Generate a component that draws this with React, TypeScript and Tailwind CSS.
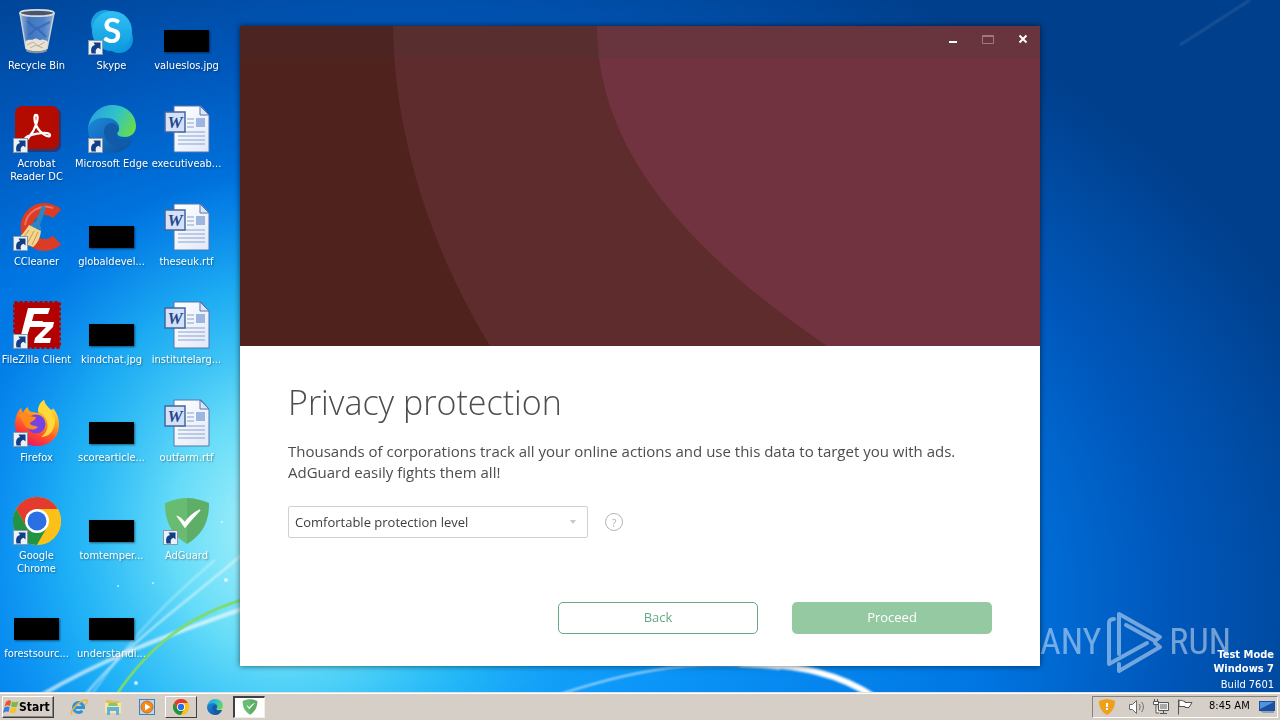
import type { ReactNode } from "react";

const Shortcut = () => (
  <svg viewBox="0 0 15 15" className="absolute bottom-0 left-0 size-[15px]" aria-hidden="true">
    <rect x="0.5" y="0.5" width="14" height="14" fill="#e9f1f9" stroke="#8b97a5" />
    <path d="M3.500 13.500c-1-5 0-7.500 3.500-8.500l-1.500-2.500h7v7l-2-1.700c-2.500.7-3.500 2.700-2.500 5.700z" fill="#123e86" />
  </svg>
);

const RecycleBin = () => (
  <svg viewBox="0 0 48 48" className="size-12">
    <defs>
      <linearGradient id="bin-glass">
        <stop offset="0" stopColor="#b9c9dc" />
        <stop offset="0.25" stopColor="#4d7cc2" />
        <stop offset="0.7" stopColor="#5c8dd0" />
        <stop offset="1" stopColor="#a8bdd6" />
      </linearGradient>
    </defs>
    <path d="M7 6l6 36c0 4 21 4 21 0l7-36z" fill="url(#bin-glass)" opacity="0.85" />
    <path d="M7 6l6 36M41 6l-7 36" stroke="#c3cedb" strokeWidth="1.5" />
    <path d="M12 35c3-4 6-1 9-3s5 2 7 1 5 0 7 2l-1 7c-3 3-18 3-21 0z" fill="#e8e2d4" />
    <path d="M14 38l6-3 5 4 7-4M17 41l6-3 7 3" fill="none" stroke="#bcae98" />
    <path d="M13 42c4 3 17 3 21 0v2c-3 3-18 3-21 0z" fill="#8b8f98" />
    <path d="M14 14l9 8 14-7M16 28l8-7 9 9" fill="none" stroke="#2f63b3" strokeWidth="2" opacity="0.7" />
    <ellipse cx="24" cy="6" rx="17" ry="3.2" fill="#49566b" stroke="#d9dde2" strokeWidth="1.8" />
  </svg>
);

const Skype = () => (
  <svg viewBox="0 0 48 48" className="size-12">
    <defs>
      <linearGradient id="skype" x1="0" y1="0" x2="0" y2="1">
        <stop offset="0" stopColor="#2fc0f2" />
        <stop offset="1" stopColor="#0f9be0" />
      </linearGradient>
    </defs>
    <circle cx="17" cy="17" r="14" fill="#1a9fdf" />
    <circle cx="31" cy="32" r="14" fill="#0d9ae0" />
    <circle cx="24" cy="24" r="20" fill="url(#skype)" />
    <text x="24" y="36" textAnchor="middle" fontSize="34" fontWeight="700" fill="#fff" className="font-['Lato',sans-serif]">S</text>
  </svg>
);

const Acrobat = () => (
  <svg viewBox="0 0 48 48" className="size-12">
    <rect x="3" y="3" width="45" height="44" rx="7" fill="#5a1018" opacity="0.5" />
    <rect x="2" y="1" width="44" height="43" rx="7" fill="#b30b00" />
    <path
      d="M12 34c0-4 24-9 25-4 0 4-10-1-14-10-2-5-2-10 0-10 4 0 0 14-7 22-2 3-4 4-4 2z"
      fill="none"
      stroke="#fff"
      strokeWidth="2.3"
      strokeLinejoin="round"
    />
  </svg>
);

const Edge = ({ id, className }: { id: string; className: string }) => (
  <svg viewBox="0 0 48 48" className={className}>
    <defs>
      <linearGradient id={`${id}-top`} x1="0" y1="0.3" x2="1" y2="0.7">
        <stop offset="0" stopColor="#2a9fe0" />
        <stop offset="0.5" stopColor="#2fc3c9" />
        <stop offset="1" stopColor="#6bdc47" />
      </linearGradient>
      <linearGradient id={`${id}-low`} x1="0" y1="0" x2="1" y2="1">
        <stop offset="0" stopColor="#1b8ade" />
        <stop offset="1" stopColor="#0d4c94" />
      </linearGradient>
    </defs>
    <path d="M0 24C1 10 12 0 24 0c15 0 24 10 24 21 0 7-5 11-11 11-7 0-9-3-7-5 3-4 0-12-9-12C10 15 1 20 0 24z" fill={`url(#${id}-top)`} />
    <path d="M0 24c1-7 9-12 19-11 8 0 13 6 12 12-1 3-4 3-3 6 2 3 11 4 17 2C42 42 34 48 24 48 10 48 0 37 0 24z" fill={`url(#${id}-low)`} />
    <path d="M16 27c0-5 3-9 8-9 5 1 8 5 6 8-2 2-3 4-1 6 4 3 11 3 16 1-2 5-6 8-10 9-10 1-19-6-19-15z" fill="#125ba8" />
  </svg>
);

const CCleaner = () => (
  <svg viewBox="0 0 48 48" className="size-12">
    <path d="M44 11a18 18 0 1 0 0 26" fill="none" stroke="#db3c26" strokeWidth="12" />
    <path d="M40 5a21 21 0 0 0-28 17" fill="none" stroke="#f0705a" strokeWidth="2" />
    <path d="M29 3l4 1-6 18 2 6-13-5 7-5z" fill="#2c86c2" />
    <path d="M16 22l12 6c-1 7-3 12-8 16L2 37c7-4 10-9 14-15z" fill="#f4d590" />
    <path d="M16 27l-8 11M21 28l-7 13M25 29l-6 13" stroke="#c99a4a" />
  </svg>
);

const FileZilla = () => (
  <svg viewBox="0 0 48 48" className="size-12">
    <rect x="1.5" y="1.5" width="45" height="45" fill="#b30000" stroke="#b30000" strokeWidth="3" strokeDasharray="3 2" />
    <path d="M15 7h22l-2 6H21l-2 7h11l-2 6H17l-4 12H7z" fill="#fff" />
    <path d="M26 21h15l-1 5-11 11h9l-1 5H21l1-5 11-11h-8z" fill="#fff" />
  </svg>
);

const Firefox = () => (
  <svg viewBox="0 0 48 48" className="size-12">
    <defs>
      <linearGradient id="fox" x1="0.8" y1="0" x2="0.3" y2="1">
        <stop offset="0" stopColor="#fff04a" />
        <stop offset="0.4" stopColor="#ff9a1f" />
        <stop offset="0.75" stopColor="#ff4033" />
        <stop offset="1" stopColor="#e3156a" />
      </linearGradient>
    </defs>
    <path d="M2 26c0-8 2-13 6-17l2 5c1-3 3-5 5-6 0 3 2 5 5 5l5 1c0-5 2-11 6-13 1 5 4 7 7 10 2-1 2-1 2-2 4 5 6 10 6 17 0 12-9 21-22 21S2 38 2 26z" fill="url(#fox)" />
    <path d="M31 1c1 5 4 7 7 10 3 4 4 8 4 12-1 10-7 15-14 15 7-5 8-12 5-18-3-5-7-7-8-8 0-4 2-9 6-11z" fill="#ffd83a" />
    <circle cx="23" cy="25" r="9.5" fill="#7542e5" />
    <path d="M5 16c4-2 8-2 11 1l7 1c0 3-4 4-6 6 0 3 5 2 8 4-4 4-10 3-13-1-2-3-2-6-7-11z" fill="#ff8a1c" />
  </svg>
);

const Chrome = ({ className }: { className: string }) => (
  <svg viewBox="0 0 48 48" className={className}>
    <circle cx="24" cy="24" r="24" fill="#fbc116" />
    <path d="M24 12h20.800A24 24 0 0 0 3.200 12L13.600 30z" fill="#e33b2e" />
    <path d="M3.200 12A24 24 0 0 0 24 48L34.400 30H13.600z" fill="#229342" />
    <path d="M24 12h20.800A24 24 0 0 1 24 48l10.400-18z" fill="#fbc116" />
    <circle cx="24" cy="24" r="12" fill="#fff" />
    <circle cx="24" cy="24" r="9.5" fill="#2a6fe3" />
  </svg>
);

const AdGuard = ({ className }: { className: string }) => (
  <svg viewBox="0 0 48 48" className={className}>
    <path d="M24 1C17 1 9 3 2 6c0 8 0 28 22 41V1z" fill="#68bc71" />
    <path d="M24 1c7 0 15 2 22 5 0 8 0 28-22 41V1z" fill="#5fae68" />
    <path d="M15 20c3 1 5 4 7 6 4-6 9-10 15-13-5 5-10 11-15 17z" fill="#fff" stroke="#fff" strokeWidth="1.5" />
  </svg>
);

const WordDoc = () => (
  <svg viewBox="0 0 48 48" className="size-12">
    <defs>
      <linearGradient id="page" x1="0" y1="0" x2="1" y2="1">
        <stop offset="0" stopColor="#fff" />
        <stop offset="1" stopColor="#e1e9f8" />
      </linearGradient>
    </defs>
    <path d="M11 1h27l8 9v37H11z" fill="url(#page)" stroke="#5875ab" />
    <path d="M37 1v9h9z" fill="#dbe6f8" stroke="#5875ab" />
    <path d="M24 14h7M24 18h7M24 22h7M15 27h27M15 31h27M15 35h27M15 39h27" stroke="#8aa1cf" />
    <rect x="33" y="13" width="9" height="9" fill="#9db6e0" />
    <rect x="2" y="7" width="20" height="20" fill="#d5e1f7" stroke="#44659f" strokeWidth="1.5" />
    <text x="12" y="23" textAnchor="middle" fontSize="17" fontWeight="700" fontStyle="italic" fill="#24488f" className="font-['Liberation_Serif',serif]">W</text>
  </svg>
);

const Picture = () => <span className="mb-[3px] block h-[22px] w-[45px] bg-black shadow-[1px_1px_2px_rgba(0,0,0,0.5)]" />;

type DesktopItem = { label: string; icon: ReactNode; shortcut?: boolean };

const items: DesktopItem[] = [
  { label: "Recycle Bin", icon: <RecycleBin /> },
  { label: "Acrobat Reader DC", icon: <Acrobat />, shortcut: true },
  { label: "CCleaner", icon: <CCleaner />, shortcut: true },
  { label: "FileZilla Client", icon: <FileZilla />, shortcut: true },
  { label: "Firefox", icon: <Firefox />, shortcut: true },
  { label: "Google Chrome", icon: <Chrome className="size-12" />, shortcut: true },
  { label: "forestsourc...", icon: <Picture /> },
  { label: "Skype", icon: <Skype />, shortcut: true },
  { label: "Microsoft Edge", icon: <Edge id="edge-desk" className="size-12" />, shortcut: true },
  { label: "globaldevel...", icon: <Picture /> },
  { label: "kindchat.jpg", icon: <Picture /> },
  { label: "scorearticle...", icon: <Picture /> },
  { label: "tomtemper...", icon: <Picture /> },
  { label: "understandi...", icon: <Picture /> },
  { label: "valueslos.jpg", icon: <Picture /> },
  { label: "executiveab...", icon: <WordDoc /> },
  { label: "theseuk.rtf", icon: <WordDoc /> },
  { label: "institutelarg...", icon: <WordDoc /> },
  { label: "outfarm.rtf", icon: <WordDoc /> },
  { label: "AdGuard", icon: <AdGuard className="size-12" />, shortcut: true },
];

const Wallpaper = () => (
  <svg viewBox="0 0 1280 720" preserveAspectRatio="none" className="absolute inset-0 size-full" aria-hidden="true">
    <defs>
      <radialGradient id="sky" gradientUnits="userSpaceOnUse" cx="0" cy="0" r="1" gradientTransform="translate(400 600) scale(980 700)">
        <stop offset="0" stopColor="#1fb2fb" />
        <stop offset="0.3" stopColor="#0a94f8" />
        <stop offset="0.6" stopColor="#0076e2" />
        <stop offset="0.78" stopColor="#0058bc" />
        <stop offset="1" stopColor="#003f8c" />
      </radialGradient>
      <radialGradient id="glow" gradientUnits="userSpaceOnUse" cx="0" cy="0" r="1" gradientTransform="translate(280 530) scale(310 360)">
        <stop offset="0" stopColor="#b4f5fb" />
        <stop offset="0.35" stopColor="#6fe3f8" stopOpacity="0.9" />
        <stop offset="0.7" stopColor="#2bc4f6" stopOpacity="0.6" />
        <stop offset="1" stopColor="#1fa8f5" stopOpacity="0" />
      </radialGradient>
      <filter id="soft" x="-20%" y="-20%" width="140%" height="140%">
        <feGaussianBlur stdDeviation="1.2" />
      </filter>
    </defs>
    <rect width="1280" height="720" fill="url(#sky)" />
    <rect width="1280" height="720" fill="url(#glow)" />
    <g fill="none" stroke="#fff" filter="url(#soft)">
      <path d="M40 696C100 660 170 634 245 608" strokeWidth="4" opacity="0.65" />
      <path d="M86 694C130 640 190 600 245 552" strokeWidth="2" opacity="0.6" />
      <path d="M92 694C140 625 180 590 215 560" strokeWidth="2" opacity="0.4" />
      <path d="M555 696C660 660 720 662 780 669" strokeWidth="2" opacity="0.7" />
      <path d="M740 664C800 664 840 674 876 698" strokeWidth="6" />
      <path d="M1180 45L1250 0" strokeWidth="2" opacity="0.15" />
    </g>
    <path d="M117 694C150 645 190 615 245 599" fill="none" stroke="#7ddc68" strokeWidth="3" opacity="0.9" />
    <g fill="#fff" opacity="0.7">
      <circle cx="222" cy="522" r="1" />
      <circle cx="226" cy="580" r="2" />
      <circle cx="136" cy="683" r="2" />
      <circle cx="118" cy="586" r="1" />
      <circle cx="153" cy="583" r="1" />
    </g>
  </svg>
);

const Watermark = () => (
  <div className="absolute right-[49px] bottom-4 flex items-center gap-1.5 font-['Roboto_Condensed','Roboto',sans-serif] text-[36px] leading-[68px] text-white opacity-45" aria-hidden="true">
    <span>ANY</span>
    <svg viewBox="0 0 56 64" className="h-16 w-14" fill="none" stroke="currentColor" strokeWidth="4" strokeLinejoin="round" strokeLinecap="round">
      <path d="M7 9c-3 0-5 1-5 4v41l38-21" />
      <path d="M12 44V4l41 23-5 4-29-16" />
      <path d="M12 54v7l41-24-5-4" />
    </svg>
    <span>RUN</span>
  </div>
);

const Banner = () => (
  <svg viewBox="0 0 800 320" preserveAspectRatio="none" className="absolute inset-0 size-full" aria-hidden="true">
    <rect width="800" height="320" fill="#4f221e" />
    <path d="M153 0C154 90 180 205 250 320H800V0z" fill="#5e2c2c" />
    <path d="M357 0C357 120 440 220 587 320H800V0z" fill="#70333f" />
  </svg>
);

const AdGuardWindow = () => (
  <section className="relative flex w-[62.5%] flex-col bg-white font-['Open_Sans','Noto_Sans',sans-serif] shadow-[0_0_6px_rgba(0,0,0,0.6)]">
    <div className="relative h-80">
      <Banner />
      <header className="relative flex h-8 items-center justify-end bg-[#3c3c3c]/15 pb-1.5 text-white">
        <button type="button" aria-label="Minimize" className="flex h-6 w-[35px] items-center justify-center">
          <svg viewBox="0 0 12 12" className="size-3" fill="currentColor"><path d="M2 8h8v2H2z" /></svg>
        </button>
        <button type="button" aria-label="Maximize" disabled className="flex h-6 w-[35px] items-center justify-center text-[#a07a80]">
          <svg viewBox="0 0 12 12" className="size-3" fill="none" stroke="currentColor"><path d="M0.5 2.5h11v8h-11zM0 3.5h12" /></svg>
        </button>
        <button type="button" aria-label="Close" className="flex h-6 w-[35px] items-center justify-center">
          <svg viewBox="0 0 12 12" className="size-3" fill="none" stroke="currentColor" strokeWidth="2"><path d="M2.5 2.5l7 7M9.5 2.5l-7 7" /></svg>
        </button>
      </header>
    </div>
    <div className="px-12 py-8 text-[#4d4d4d]">
      <h1 className="text-[34px] leading-[48px] font-light">Privacy protection</h1>
      <p className="mt-[15px] text-[15px] leading-[21px]">
        Thousands of corporations track all your online actions and use this data to target you with ads.
        <br />
        AdGuard easily fights them all!
      </p>
      <div className="mt-[23px] flex items-center gap-4">
        <div className="relative w-[300px]">
          <select
            aria-label="Protection level"
            defaultValue="comfortable"
            className="block h-8 w-full appearance-none rounded-xs border border-[#d0d0d0] bg-white pt-0.5 pl-1.5 text-[13px] text-[#3d3d3d]"
          >
            <option value="comfortable">Comfortable protection level</option>
          </select>
          <svg viewBox="0 0 6 4" className="pointer-events-none absolute top-3.5 right-3 h-1 w-1.5" fill="#c8c8c8"><path d="M0 0h6L3 4z" /></svg>
        </div>
        <button type="button" aria-label="Help" className="flex size-5 items-center justify-center">
          <span className="flex size-[18px] items-center justify-center rounded-full border border-[#b5b5b5] text-[11px] leading-none text-[#b5b5b5]">?</span>
        </button>
      </div>
      <div className="mt-16 flex justify-end gap-[34px] text-[13px]">
        <button type="button" className="h-8 w-[200px] rounded-[5px] border border-[#67a983] text-[#67a983]">Back</button>
        <button type="button" className="h-8 w-[200px] rounded-[5px] bg-[#95c9a2] text-white">Proceed</button>
      </div>
    </div>
  </section>
);

const Ie = () => (
  <svg viewBox="0 0 18 18" className="size-[18px]" fill="none">
    <path d="M4 9.5h9.500a5 5 0 1 0-1.200 3.300" stroke="#2f93dc" strokeWidth="3" />
    <path d="M2 16.500c-3-3 8-15 14.500-14.500 2 1-.5 3.500-1.500 5" stroke="#e8b933" strokeWidth="1.5" />
  </svg>
);

const Folder = () => (
  <svg viewBox="0 0 18 18" className="size-[18px]">
    <path d="M2 2h5l1 1h7v5H2z" fill="#e3bf58" />
    <path d="M1 5h16v10H1z" fill="#f8e7a0" />
    <path d="M5 5h8l1 3H4z" fill="#8bc36d" />
    <path d="M3 9h12v8h-3v-4H6v4H3z" fill="#62b3dc" />
  </svg>
);

const Player = () => (
  <svg viewBox="0 0 18 18" className="size-[18px]">
    <rect x="1.5" y="1.5" width="15" height="15" fill="#b9d9f2" stroke="#3d83bb" />
    <circle cx="9" cy="9" r="6" fill="#f18a1c" stroke="#d56d0c" />
    <path d="M7 5.500l5.500 3.500L7 12.500z" fill="#fff" />
  </svg>
);

const WinFlag = () => (
  <svg viewBox="0 0 16 16" className="size-4">
    <path d="M3 3c2-2 4-2 5-1L7 7C5 6 4 6 1.500 7.500z" fill="#e8552a" />
    <path d="M9 2.500c2 1 4 1 6.500 0L14 7.500c-2 1-4 1-6 0z" fill="#7cbb3c" />
    <path d="M1.300 8.500C3 7.500 5 7 6.700 8l-1.200 5C4 12 2 12.500 0 14z" fill="#3d7fd6" />
    <path d="M7.700 8.500c2 1 4 1 6 0l-1.200 5c-2 1-4 1-6 0z" fill="#f7c22d" />
  </svg>
);

const launchers = [
  { name: "Internet Explorer", icon: <Ie />, frame: "" },
  { name: "Windows Explorer", icon: <Folder />, frame: "" },
  { name: "Media Player", icon: <Player />, frame: "" },
  { name: "Google Chrome", icon: <Chrome className="size-4" />, frame: "border border-t-white border-l-white border-r-[#404040] border-b-[#404040]" },
  { name: "Microsoft Edge", icon: <Edge id="edge-bar" className="size-4" />, frame: "" },
  { name: "AdGuard", icon: <AdGuard className="size-4" />, frame: "border-t-2 border-l-2 border-r border-b bg-white border-t-[#404040] border-l-[#404040] border-r-[#f2f0ed] border-b-[#f2f0ed]" },
];

const Taskbar = () => (
  <footer className="relative flex h-7 shrink-0 items-center justify-between border-t border-[#e4e1dc] bg-[#d5cfc8] px-0.5 text-[11px] text-black shadow-[inset_0_1px_0_#fff]">
    <nav className="flex items-center">
      <button type="button" className="flex h-[22px] w-[52px] items-center border border-t-white border-l-white border-r-[#404040] border-b-[#404040] text-xs font-bold shadow-[inset_-1px_-1px_0_#8a8680]">
        <WinFlag />
        Start
      </button>
      <ul className="ml-[9px] flex gap-0.5">
        {launchers.map(({ name, icon, frame }) => (
          <li key={name}>
            <button type="button" aria-label={name} className={`flex h-[22px] w-8 items-center justify-center ${frame}`}>
              {icon}
            </button>
          </li>
        ))}
      </ul>
    </nav>
    <div className="flex h-[22px] w-[186px] items-center border border-t-[#85817b] border-l-[#85817b] border-r-white border-b-white pr-0.5 pl-1.5">
      <svg viewBox="0 0 16 16" className="size-4">
        <path d="M8 0c3 0 5 1 8 2 0 4-1 10-8 14C1 12 0 6 0 2c3-1 5-2 8-2z" fill="#f0a018" />
        <path d="M7 4h2v4H7zM7 9h2v2H7z" fill="#fff" />
      </svg>
      <svg viewBox="0 0 16 16" className="ml-3.5 size-4" fill="none" stroke="#6b6b6b">
        <path d="M.5 5.500h3l4-4v13l-4-4h-3z" fill="#fff" />
        <path d="M10 5c1.500 2 1.500 4 0 6M12.500 3c2.500 3 2.500 7 0 10" />
      </svg>
      <svg viewBox="0 0 16 16" className="ml-2 size-4" fill="none" stroke="#555">
        <path d="M5.500 3.500h10v8h-10zM7 14.500h7M10.500 12v2" fill="#f2f2f2" />
        <path d="M7 5h7v5H7z" fill="#a8a8a8" stroke="none" />
        <path d="M.5 2.500h5v3h-5zM1.500 0v2M4.500 0v2M3 6v8h3" fill="#fff" />
      </svg>
      <svg viewBox="0 0 16 16" className="ml-2 size-4" fill="#fff" stroke="#555">
        <path d="M1.500.5v15M2 1.500c3-1 4 1 6 1v1h7l-3 5H8v-1H2z" />
      </svg>
      <time className="ml-4 whitespace-nowrap">8:45 AM</time>
      <svg viewBox="0 0 16 14" className="ml-auto h-3.5 w-4">
        <path d="M0 1h16v10H0z" fill="#1c4f9e" />
        <path d="M1 2h14L1 9z" fill="#4f94e2" />
        <path d="M1 11h14v2H4z" fill="#8ba0bd" />
      </svg>
    </div>
  </footer>
);

export default function App() {
  return (
    <div className="relative flex min-h-screen flex-col overflow-hidden font-['DejaVu_Sans_Condensed','DejaVu_Sans',sans-serif]">
      <Wallpaper />
      <main className="relative flex flex-1 items-center justify-center">
        <ul className="absolute top-0 -left-px grid auto-cols-[75px] grid-flow-col grid-rows-[repeat(7,98px)] text-[11px] leading-[13px] text-white">
          {items.map(({ label, icon, shortcut }) => (
            <li key={label} className="flex flex-col items-center gap-1 pt-[7px] text-center">
              <span className="relative flex size-12 items-end justify-center">
                {icon}
                {shortcut && <Shortcut />}
              </span>
              <span className="[text-shadow:1px_1px_2px_rgba(0,0,0,0.4)]">{label}</span>
            </li>
          ))}
        </ul>
        <Watermark />
        <AdGuardWindow />
        <div className="absolute right-1.5 bottom-0 text-right text-[11px] leading-[14px] text-white">
          <p className="font-bold">Test Mode</p>
          <p className="font-bold">Windows 7</p>
          <p className="mt-0.5">Build 7601</p>
        </div>
      </main>
      <Taskbar />
    </div>
  );
}
